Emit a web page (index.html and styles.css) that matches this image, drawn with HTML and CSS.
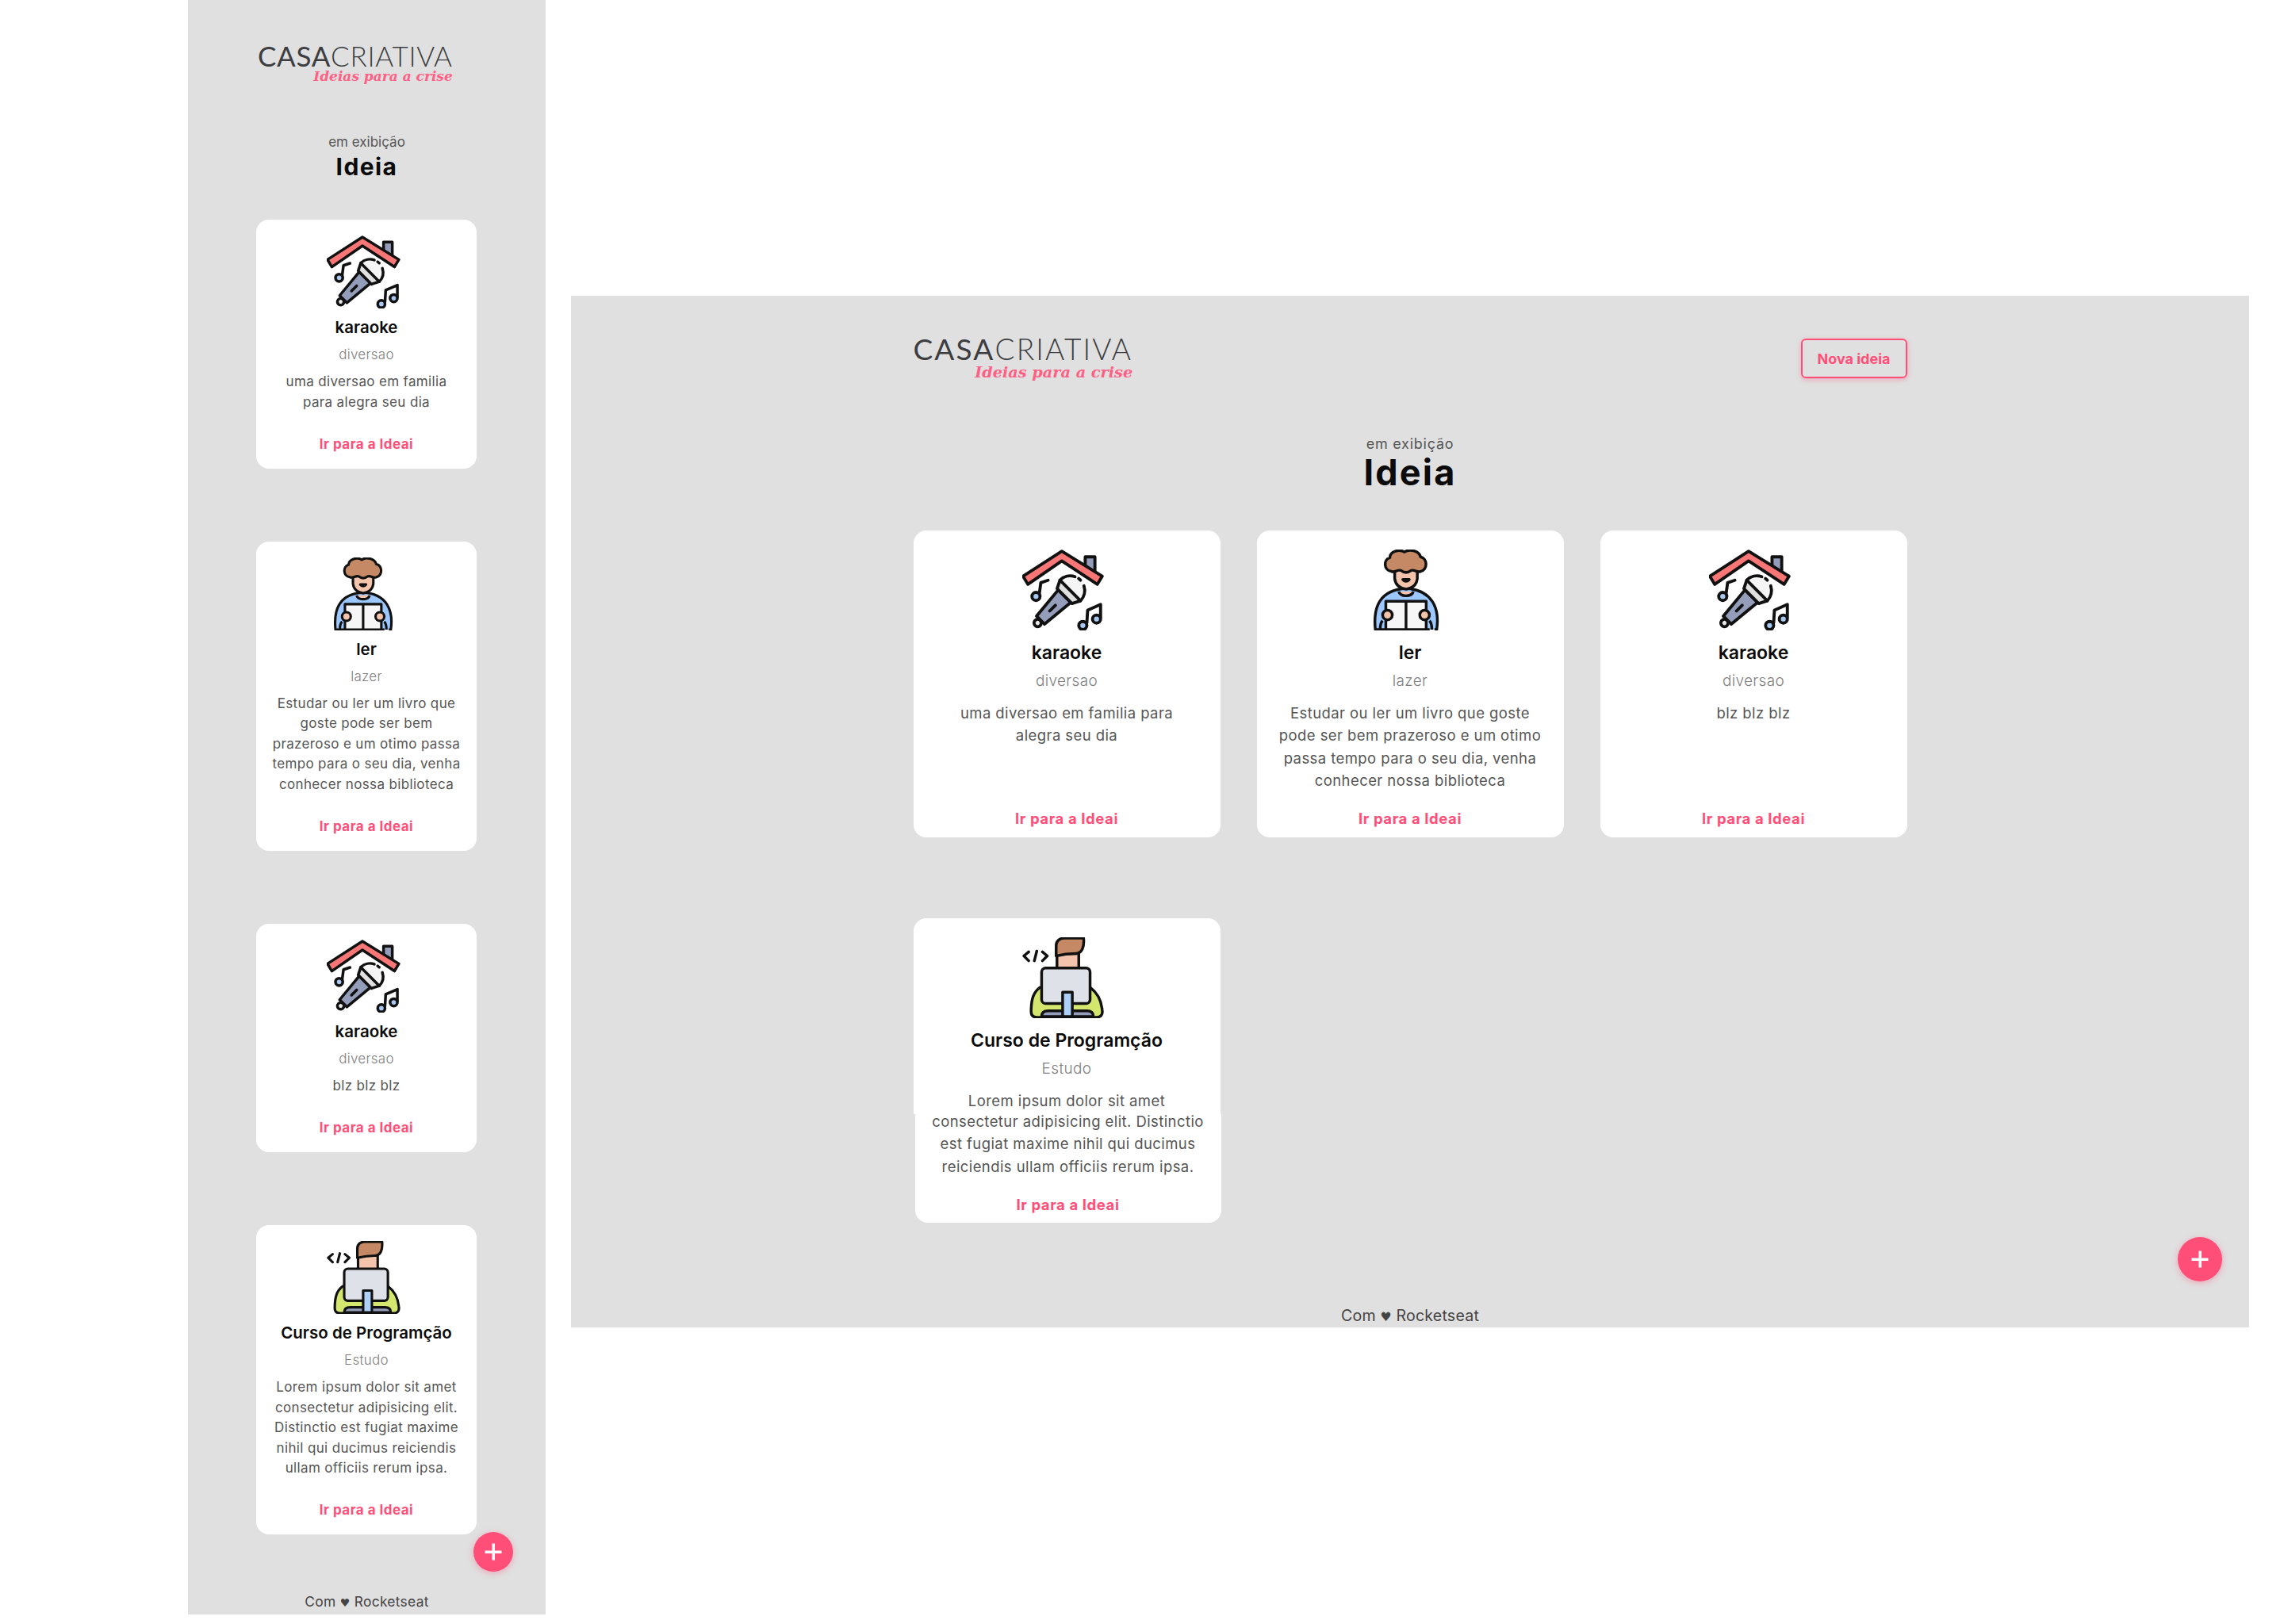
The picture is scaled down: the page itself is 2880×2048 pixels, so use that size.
FILE: index.html
```html
<!DOCTYPE html>
<html lang="en">
<head>
    <meta charset="UTF-8">
    <title>Casa Criativa</title>
    <link rel="stylesheet" href="styles.css">
</head>
<body>

    <svg class="sprite" xmlns="http://www.w3.org/2000/svg">
        <symbol id="icon-karaoke" viewBox="0 0 110 100">
            <g stroke="#111" stroke-width="3.8" stroke-linejoin="round" stroke-linecap="round">
                <path d="M78 20V9h12v22z" fill="#949db9"/>
                <path d="M49 2L99 33 93 43 49 14 7 43 1 33z" fill="#f87676"/>
                <g fill="none">
                    <path d="M32 38L23 41 21 56"/>
                    <path d="M80 91L81 75 97 68V84"/>
                </g>
                <g fill="#a9c8f2">
                    <circle cx="17" cy="58" r="5"/>
                    <circle cx="75" cy="94" r="5"/>
                    <circle cx="92" cy="86" r="5"/>
                </g>
                <g transform="translate(17 93) rotate(-45)">
                    <circle cx="3" cy="0" r="4.5" fill="#e8e8e8"/>
                    <path d="M8-7L50-11V11L8 7z" fill="#949db9"/>
                    <path d="M24 0H34" fill="none"/>
                    <path d="M60-18A18 18 0 0 1 60 18z" fill="#f5f5f5" stroke="none"/>
                    <path d="M50-13L60-18V18L50 13z" fill="#e0e0e0"/>
                    <path d="M60-18A18 18 0 0 1 78 0" fill="none" stroke-dasharray="20 5 6"/>
                    <path d="M76 8A18 18 0 0 1 60 18" fill="none"/>
                </g>
            </g>
        </symbol>
        <symbol id="icon-reader" viewBox="0 0 110 100">
            <g transform="translate(10 0)" stroke="#111" stroke-width="3.4" stroke-linejoin="round">
                <path d="M2 99C-1 70 8 50 40 48 72 50 82 72 78 99z" fill="#9cc8ff" stroke-dasharray="150 6 200"/>
                <path d="M26 20V36C27 44 33 48 40 49 47 48 53 44 54 36V20z" fill="#f3c4ab"/>
                <path d="M31 52C33 59 47 59 49 52" fill="#f3c4ab"/>
                <path d="M36 37C38 40 42 40 44 37z" fill="#111"/>
                <path d="M22 27C12 26 12 12 20 10 20 2 32-1 38 3 44-1 56 1 58 9 67 11 67 25 58 27 54 29 50 24 46 26 42 29 38 29 34 26 30 24 26 29 22 27z" fill="#c58a65"/>
                <path d="M15 64H65V99H15zM40 64V99" fill="#f6f6f6"/>
                <circle cx="17" cy="81" r="6" fill="#f3c4ab"/>
                <circle cx="63" cy="81" r="6" fill="#f3c4ab"/>
                <path d="M8 99C8 92 9 90 11 88M72 99C72 92 71 90 69 88" fill="none"/>
            </g>
        </symbol>
        <symbol id="icon-coder" viewBox="0 0 110 100">
            <g stroke="#111" stroke-width="3.4" stroke-linejoin="round" stroke-linecap="round">
                <path d="M8 18L2 23 8 29M18 17L15 29M25 18L31 23 25 29" fill="none"/>
                <path d="M43 20H70V40H43z" fill="#f3c4ab"/>
                <path d="M42 23V10C42 4 47 1 52 1H76C77 12 74 20 66 20 58 20 50 21 42 23z" fill="#c58a65"/>
                <path d="M22 62C14 68 11 76 11 92 11 97 14 99 18 99H92C97 99 100 96 99 90 98 78 92 68 84 62z" fill="#d4e66e"/>
                <path d="M24 98C24 92 28 91 32 91H80C84 91 88 92 88 98z" fill="#949db9"/>
                <rect x="24" y="38" width="60" height="44" rx="5" fill="#dfe1e8"/>
                <path d="M50 98V68H62V98z" fill="#aed0f8"/>
            </g>
        </symbol>
    </svg>

    <section class="frame frame-mobile">
        <header class="top">
            <div class="logo">
                <div class="logo-name"><b>CASA</b>CRIATIVA</div>
                <div class="logo-tag">Ideias para a crise</div>
            </div>
        </header>

        <div class="heading">
            <p>em exibição</p>
            <h2>Ideia</h2>
        </div>

        <div class="cards">
            <article class="card">
                <svg class="card-icon"><use href="#icon-karaoke"/></svg>
                <h3>karaoke</h3>
                <p class="category">diversao</p>
                <p class="desc">uma diversao em familia<br>para alegra seu dia</p>
                <a class="card-link" href="#">Ir para a Ideai</a>
            </article>
            <article class="card">
                <svg class="card-icon"><use href="#icon-reader"/></svg>
                <h3>ler</h3>
                <p class="category">lazer</p>
                <p class="desc desc-long">Estudar ou ler um livro que<br>goste pode ser bem<br>prazeroso e um otimo passa<br>tempo para o seu dia, venha<br>conhecer nossa biblioteca</p>
                <a class="card-link" href="#">Ir para a Ideai</a>
            </article>
            <article class="card">
                <svg class="card-icon"><use href="#icon-karaoke"/></svg>
                <h3>karaoke</h3>
                <p class="category">diversao</p>
                <p class="desc">blz blz blz</p>
                <a class="card-link" href="#">Ir para a Ideai</a>
            </article>
            <article class="card">
                <svg class="card-icon"><use href="#icon-coder"/></svg>
                <h3>Curso de Programção</h3>
                <p class="category">Estudo</p>
                <p class="desc">Lorem ipsum dolor sit amet<br>consectetur adipisicing elit.<br>Distinctio est fugiat maxime<br>nihil qui ducimus reiciendis<br>ullam officiis rerum ipsa.</p>
                <a class="card-link" href="#">Ir para a Ideai</a>
            </article>
        </div>

        <footer class="foot">Com <span class="heart">♥</span> Rocketseat</footer>
        <button class="fab" type="button"><span class="plus"></span></button>
    </section>

    <section class="frame frame-desktop">
        <div class="wrap">
            <header class="top">
                <div class="logo">
                    <div class="logo-name"><b>CASA</b>CRIATIVA</div>
                    <div class="logo-tag">Ideias para a crise</div>
                </div>
                <button class="new-idea" type="button">Nova ideia</button>
            </header>

            <div class="heading">
                <p>em exibição</p>
                <h2>Ideia</h2>
            </div>

            <div class="cards">
                <article class="card">
                    <svg class="card-icon"><use href="#icon-karaoke"/></svg>
                    <h3>karaoke</h3>
                    <p class="category">diversao</p>
                    <p class="desc">uma diversao em familia para<br>alegra seu dia</p>
                    <a class="card-link" href="#">Ir para a Ideai</a>
                </article>
                <article class="card">
                    <svg class="card-icon"><use href="#icon-reader"/></svg>
                    <h3>ler</h3>
                    <p class="category">lazer</p>
                    <p class="desc">Estudar ou ler um livro que goste<br>pode ser bem prazeroso e um otimo<br>passa tempo para o seu dia, venha<br>conhecer nossa biblioteca</p>
                    <a class="card-link" href="#">Ir para a Ideai</a>
                </article>
                <article class="card">
                    <svg class="card-icon"><use href="#icon-karaoke"/></svg>
                    <h3>karaoke</h3>
                    <p class="category">diversao</p>
                    <p class="desc">blz blz blz</p>
                    <a class="card-link" href="#">Ir para a Ideai</a>
                </article>
                <article class="card-split">
                    <div class="card card-top">
                        <svg class="card-icon"><use href="#icon-coder"/></svg>
                        <h3>Curso de Programção</h3>
                        <p class="category">Estudo</p>
                        <p class="desc">Lorem ipsum dolor sit amet</p>
                    </div>
                    <div class="card card-rest">
                        <p class="desc">consectetur adipisicing elit. Distinctio<br>est fugiat maxime nihil qui ducimus<br>reiciendis ullam officiis rerum ipsa.</p>
                        <a class="card-link" href="#">Ir para a Ideai</a>
                    </div>
                </article>
            </div>

            <footer class="foot">Com <span class="heart">♥</span> Rocketseat</footer>
        </div>
        <button class="fab" type="button"><span class="plus"></span></button>
    </section>

</body>
</html>
```

FILE: styles.css
```css
* {
    box-sizing: border-box;
}

body {
    display: flex;
    align-items: flex-start;
    gap: 32px;
    height: 2048px;
    margin: 0;
    padding-left: 237px;
    background-color: #fff;
    color: #555;
    font-family: Inter, "Open Sans", sans-serif;
}

h2, h3, p {
    margin: 0;
}

.sprite {
    display: none;
}

.frame {
    position: relative;
    background-color: #e0e0e0;
    text-align: center;
}

.frame-mobile {
    width: 451px;
    height: 2036px;
}

.frame-desktop {
    width: 2116px;
    height: 1301px;
    margin-top: 373px;
}

.wrap {
    width: 1253px;
    margin: 0 auto;
}

/* header */

.top {
    display: flex;
    justify-content: space-between;
    align-items: flex-start;
}

.frame-mobile .top {
    height: 168px;
    padding: 51px 0 0 88px;
}

.frame-desktop .top {
    height: 175px;
    padding-top: 47px;
}

.logo {
    color: #3c3e41;
    font-family: Lato, sans-serif;
    font-weight: 300;
    text-align: right;
}

.logo-name b {
    font-weight: 400;
}

.frame-mobile .logo-name {
    font-size: 35px;
    line-height: 38px;
    letter-spacing: 0.7px;
}

.frame-desktop .logo-name {
    font-size: 37px;
    line-height: 40px;
    letter-spacing: 2.15px;
}

.logo-tag {
    color: #ff5f85;
    font-family: "DejaVu Serif", serif;
    font-style: italic;
    font-weight: 700;
    white-space: nowrap;
}

.frame-mobile .logo-tag {
    margin-top: -2px;
    font-size: 17px;
    line-height: 18px;
}

.frame-desktop .logo-tag {
    font-size: 19.3px;
    line-height: 19px;
}

.new-idea {
    width: 134px;
    height: 50px;
    margin-top: 7px;
    border: 2px solid #ff4f78;
    border-radius: 6px;
    background: none;
    box-shadow: 0 2px 6px rgba(255, 79, 120, 0.4);
    color: #ff4f78;
    font-family: inherit;
    font-size: 18px;
    font-weight: 700;
}

/* title */

.heading h2 {
    color: #0b0b0b;
    font-weight: 700;
}

.frame-mobile .heading p {
    font-size: 17px;
    line-height: 22px;
}

.frame-mobile .heading h2 {
    font-size: 30px;
    line-height: 40px;
    letter-spacing: 1.4px;
}

.frame-mobile .heading {
    height: 109px;
}

.frame-desktop .heading p {
    font-size: 18px;
    line-height: 24px;
    letter-spacing: 0.75px;
}

.frame-desktop .heading h2 {
    font-size: 45px;
    line-height: 48px;
    letter-spacing: 2.2px;
}

.frame-desktop .heading {
    height: 121px;
}

/* cards */

.cards {
    display: grid;
}

.frame-mobile .cards {
    grid-template-columns: 278px;
    row-gap: 92px;
    padding-left: 86px;
}

.frame-desktop .cards {
    grid-template-columns: repeat(3, 387px);
    column-gap: 46px;
    row-gap: 102px;
}

.card {
    display: flex;
    flex-direction: column;
    align-items: center;
    border-radius: 16px;
    background-color: #fff;
    white-space: nowrap;
}

.card h3 {
    color: #0b0b0b;
    font-weight: 600;
}

.category {
    color: #808080;
    font-weight: 300;
}

.card-link {
    color: #ff4f78;
    font-weight: 700;
    text-decoration: none;
}

.frame-mobile .card {
    padding: 20px 0;
}

.frame-mobile .card-icon {
    width: 101px;
    height: 92px;
}

.frame-mobile .card h3 {
    margin-top: 10px;
    font-size: 20.5px;
    line-height: 28px;
}

.frame-mobile .category {
    margin-top: 9px;
    font-size: 17px;
    line-height: 22px;
    letter-spacing: 0.25px;
}

.frame-mobile .desc {
    margin-top: 11px;
    font-size: 17px;
    line-height: 25.6px;
    letter-spacing: 0.35px;
}

.frame-mobile .card-link {
    margin-top: 28.4px;
    font-size: 17px;
    line-height: 22px;
    letter-spacing: 0.47px;
}

.frame-desktop .card {
    height: 387px;
    padding: 24px 0 12px;
}

.frame-desktop .card-icon {
    width: 112px;
    height: 102px;
}

.frame-desktop .card h3 {
    margin-top: 12px;
    font-size: 23px;
    line-height: 32px;
}

.frame-desktop .category {
    margin-top: 8px;
    font-size: 19px;
    line-height: 24px;
    letter-spacing: 0.35px;
}

.frame-desktop .desc {
    margin-top: 14px;
    font-size: 18.5px;
    line-height: 28.3px;
    letter-spacing: 0.42px;
}

.frame-desktop .card-link {
    margin-top: auto;
    font-size: 18.5px;
    line-height: 24px;
    letter-spacing: 0.6px;
}

/* fourth card on the desktop frame is two pieces, the lower one sits 2px off */

.card-split {
    display: flex;
    flex-direction: column;
}

.frame-desktop .card-top {
    height: 247px;
    padding-bottom: 0;
    border-radius: 16px 16px 0 0;
}

.frame-desktop .card-rest {
    width: 386px;
    height: 137px;
    margin-left: 2px;
    padding: 0 0 11px;
    border-radius: 0 0 16px 16px;
}

.frame-desktop .card-rest .desc {
    margin-top: -5px;
}

/* footer and add button */

.foot {
    color: #444;
    line-height: 24px;
}

.heart {
    font-family: "DejaVu Sans", sans-serif;
    font-size: 0.8em;
}

.frame-mobile .foot {
    margin-top: 73px;
    font-size: 17.4px;
    letter-spacing: 0.3px;
}

.frame-desktop .foot {
    margin-top: 105px;
    font-size: 19.6px;
    letter-spacing: 0.2px;
}

.fab {
    position: absolute;
    padding: 0;
    border: none;
    border-radius: 50%;
    background-color: #ff4f78;
    box-shadow: 0 2px 8px rgba(255, 79, 120, 0.4);
}

.frame-mobile .fab {
    top: 1932px;
    left: 360px;
    width: 50px;
    height: 50px;
}

.frame-desktop .fab {
    top: 1187px;
    left: 2026px;
    width: 56px;
    height: 56px;
}

.plus {
    position: absolute;
    top: 50%;
    left: 50%;
    width: 21px;
    height: 21px;
    background:
        linear-gradient(#fff, #fff) center / 100% 3.5px no-repeat,
        linear-gradient(#fff, #fff) center / 3.5px 100% no-repeat;
    transform: translate(-50%, -50%);
}
```
